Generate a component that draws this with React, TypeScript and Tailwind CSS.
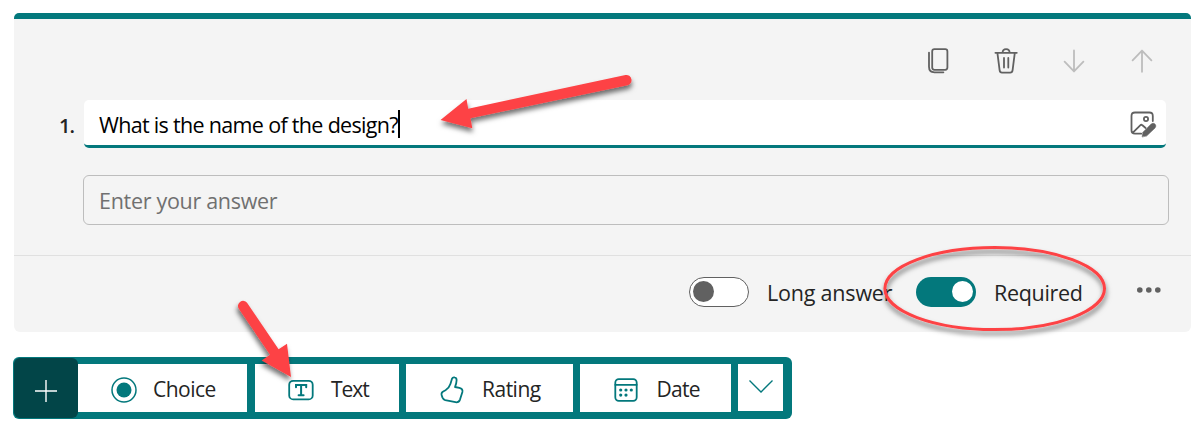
import React from "react";

type IconProps = { className?: string; children: React.ReactNode };

function Icon({ className = "", children }: IconProps) {
  return (
    <svg
      width="32"
      height="32"
      viewBox="0 0 32 32"
      fill="none"
      stroke="currentColor"
      strokeWidth="1.8"
      strokeLinecap="round"
      strokeLinejoin="round"
      className={`shrink-0 ${className}`}
    >
      {children}
    </svg>
  );
}

function CardActions() {
  return (
    <div className="flex gap-9 pl-[908px] pt-[26px] text-[#616161]">
      <Icon>
        <rect x="10.2" y="4.2" width="15.2" height="20.6" rx="2.2" />
        <path d="M7 7.6V21.8q0 5.5 5.5 5.5H21.4" />
      </Icon>
      <Icon>
        <path d="M5.4 7.8H26.8M12.6 7.8C12.6 2.9 19.6 2.9 19.6 7.8M7.4 7.8L9.6 25.2Q9.9 27.6 12 27.6H20.2Q22.3 27.6 22.6 25.2L24.8 7.8M14 13V22.6M18.3 13V22.6" />
      </Icon>
      <Icon className="text-[#bdbdbd]">
        <path d="M16 5.4V26.4M6.6 16.6L16 26.4L25.4 16.6" />
      </Icon>
      <Icon className="text-[#bdbdbd]">
        <path d="M16 5.6V26.8M6.6 15.4L16 5.6L25.4 15.4" />
      </Icon>
    </div>
  );
}

function ImageEditIcon() {
  return (
    <Icon className="mt-0.5 text-[#616161]">
      <path d="M26.8 13V8Q26.8 4.5 23.3 4.5H9Q5.5 4.5 5.5 8V22.2Q5.5 25.7 9 25.7H15.2M6.6 24.8L14.2 17.3Q15.3 16.3 16.4 17.3L19.6 20" />
      <circle cx="20" cy="11" r="2.1" />
      <path
        d="M16.2 28.6L17 24.2L25.2 16Q27 14.4 29 16Q30.8 18 29 20L20.8 27.8Z"
        fill="currentColor"
        strokeWidth="0.6"
      />
    </Icon>
  );
}

function Toggle({ on }: { on: boolean }) {
  return on ? (
    <span className="flex h-[30px] w-[60px] shrink-0 items-center justify-end rounded-full bg-[#03787c] pr-[3.5px]">
      <span className="mb-px h-[21px] w-[21px] rounded-full bg-white" />
    </span>
  ) : (
    <span className="flex h-[30px] w-[60px] shrink-0 items-center rounded-full border border-[#616161] bg-white pl-[3px]">
      <span className="mb-px h-[21px] w-[21px] rounded-full bg-[#616161]" />
    </span>
  );
}

function QuestionCard() {
  return (
    <section className="h-[319px] w-[1177px] rounded-md bg-[#f4f4f4]">
      <div className="h-1.5 rounded-t-[5px] bg-[#03787c]" />
      <CardActions />
      <div className="mt-[23px] flex">
        <div className="flex h-12 w-[70px] items-center pl-[45px] pt-1 text-[20px] font-semibold tracking-[-1px] text-[#242424]">
          1.
        </div>
        <div className="flex h-12 w-[1082px] items-center justify-between overflow-hidden rounded-[5px] border-b-[3px] border-[#03787c] bg-white pl-[15px] pr-2">
          <div className="flex items-center">
            <span className="whitespace-nowrap pt-[5px] text-[21.5px] tracking-[-0.68px] text-black">
              What is the name of the design?
            </span>
            <span className="mt-0.5 h-7 w-0.5 bg-black" />
          </div>
          <ImageEditIcon />
        </div>
      </div>
      <div className="ml-[69px] mt-[27px] flex h-[50px] w-[1086px] items-center rounded-md border border-[#bdbdbd] pl-[15px] pt-0.5">
        <span className="text-[21.5px] tracking-[-0.3px] text-[#707070]">Enter your answer</span>
      </div>
      <div className="mt-[30px] flex h-[77px] items-start border-t border-[#e0e0e0] pl-[675px] pt-[21px] text-[21.5px] leading-[30px] text-[#242424]">
        <Toggle on={false} />
        <span className="w-[167px] whitespace-nowrap pl-[18px] pt-px tracking-[-0.2px]">Long answer</span>
        <Toggle on />
        <span className="w-[154px] pl-[18px] pt-px tracking-[-0.3px]">Required</span>
        <svg width="32" height="28" viewBox="0 0 32 28" fill="#616161">
          <circle cx="9.8" cy="13" r="2.8" />
          <circle cx="18.8" cy="13" r="2.8" />
          <circle cx="27.8" cy="13" r="2.8" />
        </svg>
      </div>
    </section>
  );
}

function TypeBar() {
  const cell = "flex h-12 items-center bg-white whitespace-nowrap";
  return (
    <nav className="-ml-px mt-[25px] flex h-[62px] w-[779px] items-center rounded-md bg-[#03787c] text-[21px] tracking-[-0.5px] text-[#242424]">
      <div className="ml-px flex h-[60px] w-16 items-center justify-center rounded-md bg-[#024548] text-white">
        <svg width="24" height="24" viewBox="0 0 24 24" stroke="currentColor" strokeWidth="1.4" className="mt-1.5">
          <path d="M12 1V23M1 12H23" />
        </svg>
      </div>
      <div className={`${cell} w-[169px] pl-[30px]`}>
        <Icon className="mt-1 text-[#03787c]">
          <circle cx="16" cy="16" r="12" strokeWidth="1.5" />
          <circle cx="16" cy="16" r="7.5" fill="currentColor" stroke="none" />
        </Icon>
        <span className="pl-[13px] pt-[3px]">Choice</span>
      </div>
      <div className={`${cell} ml-2 w-36 pl-[30px]`}>
        <Icon className="mt-1 text-[#03787c]">
          <rect x="4.2" y="6.8" width="23.5" height="18.6" rx="4" />
          <path d="M11 13.2V11H21.2V13.2M16.1 11V21.3M13.6 21.3H18.6" strokeWidth="2" strokeLinejoin="miter" />
        </Icon>
        <span className="pl-[14px] pt-[3px] tracking-[-1px]">Text</span>
      </div>
      <div className={`${cell} ml-[7px] w-[167px] pl-[30px]`}>
        <Icon className="mt-1 text-[#03787c]">
          <path d="M18.7 3.4Q20.6 3.8 20.6 6.2Q20.5 9.5 19 13L23.4 13.9Q27 14.8 26.4 18L24 25.6Q22.8 28.8 19.5 28.2L9.2 26.1Q7.4 25.6 6.5 23.6L5.6 21Q5.1 18.6 7.2 17.5L9.5 16.3Q13 14.3 14.4 10L16 4.7Q16.8 2.9 18.7 3.4Z" />
        </Icon>
        <span className="pl-[14px] pt-[3px]">Rating</span>
      </div>
      <div className={`${cell} ml-[7px] w-[151px] pl-[30px]`}>
        <Icon className="mt-1 text-[#03787c]">
          <rect x="5.3" y="5.2" width="21.4" height="21.6" rx="3.5" />
          <path d="M5.3 10.8H26.7" />
          <g fill="currentColor" stroke="none">
            <circle cx="10.7" cy="16" r="1.6" />
            <circle cx="16" cy="16" r="1.6" />
            <circle cx="21.3" cy="16" r="1.6" />
            <circle cx="10.7" cy="21.1" r="1.6" />
            <circle cx="16" cy="21.1" r="1.6" />
          </g>
        </Icon>
        <span className="pl-[14.5px] pt-[3px] tracking-[-0.7px]">Date</span>
      </div>
      <div className="mb-px ml-[7px] flex h-[47px] w-[45px] items-center justify-center bg-white text-[#03787c]">
        <svg width="26" height="16" viewBox="0 0 26 16" fill="none" stroke="currentColor" strokeWidth="1.4" className="mb-1">
          <path d="M1.5 2.5L13 14L24.5 2.5" />
        </svg>
      </div>
    </nav>
  );
}

function Annotations() {
  return (
    <svg
      width="1200"
      height="425"
      viewBox="0 0 1200 425"
      className="pointer-events-none absolute left-0 top-0 text-[#fd4345]"
    >
      <defs>
        <filter id="shadow" filterUnits="userSpaceOnUse" x="0" y="0" width="1200" height="425">
          <feDropShadow dx="0.5" dy="4" stdDeviation="2.5" floodColor="#000" floodOpacity="0.55" />
        </filter>
        <filter id="shadow-left" filterUnits="userSpaceOnUse" x="0" y="0" width="1200" height="425">
          <feDropShadow dx="-1" dy="4" stdDeviation="2.5" floodColor="#000" floodOpacity="0.55" />
        </filter>
      </defs>
      <g filter="url(#shadow)">
        <path
          d="M440.5 120L466.5 99L468.2 108.7L625.5 75A5.2 5.2 0 0 1 627.5 85.2L470.5 118.2L472.3 128.2Z"
          fill="currentColor"
        />
        <ellipse cx="994.7" cy="288.6" rx="109.8" ry="41" fill="none" stroke="currentColor" strokeWidth="3" />
      </g>
      <path
        d="M291 377L261.7 360.5L270 354.7L238.8 308.8A5 5 0 0 1 247.4 303.2L278.6 349.3L287 343.8Z"
        fill="currentColor"
        filter="url(#shadow-left)"
      />
    </svg>
  );
}

export default function App() {
  return (
    <main className="relative h-[425px] w-[1200px] overflow-hidden bg-white pl-3.5 pt-[13px] font-['Open_Sans','Noto_Sans',sans-serif]">
      <QuestionCard />
      <TypeBar />
      <Annotations />
    </main>
  );
}
